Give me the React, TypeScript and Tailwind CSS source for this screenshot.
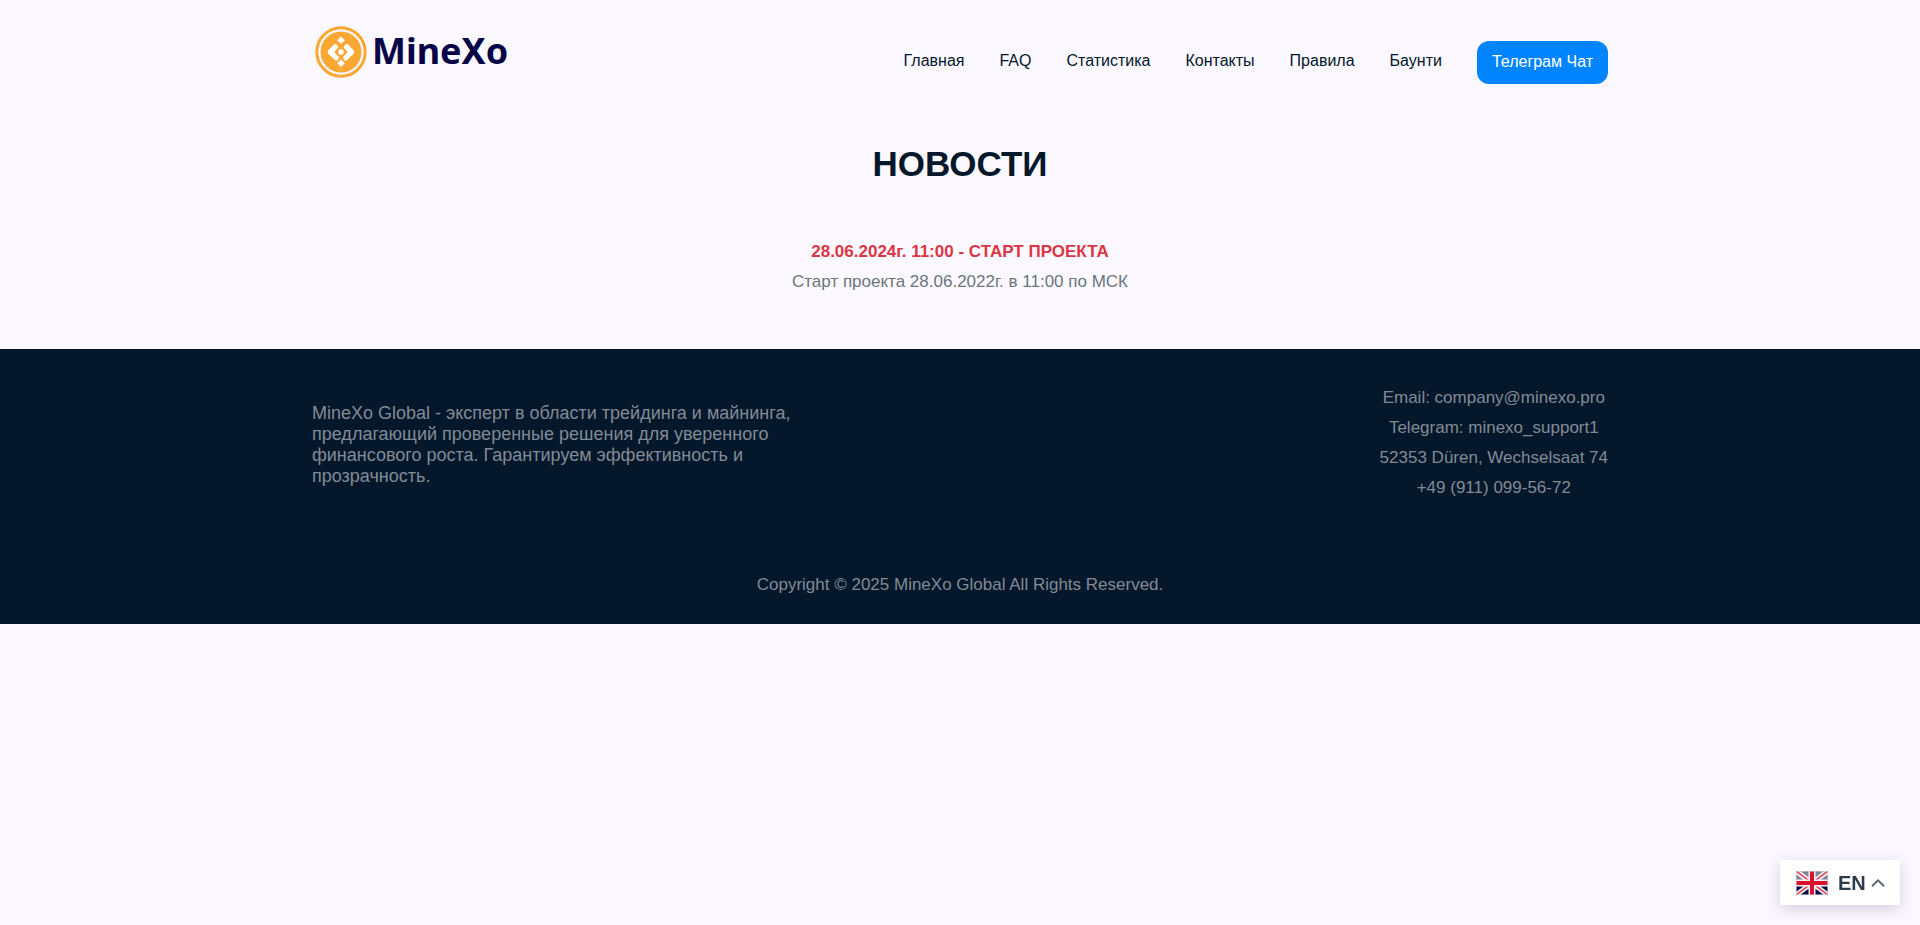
import { ChevronUp } from "lucide-react";

const navLinks = [
  { title: "Главная", href: "#home" },
  { title: "FAQ", href: "#faq" },
  { title: "Статистика", href: "#stats" },
  { title: "Контакты", href: "#contacts" },
  { title: "Правила", href: "#rules" },
  { title: "Баунти", href: "#bounty" },
];

const contacts = [
  "Email: company@minexo.pro",
  "Telegram: minexo_support1",
  "52353 Düren, Wechselsaat 74",
  "+49 (911) 099-56-72",
];

function Logo() {
  return (
    <a href="#home" aria-label="MineXo" className="flex items-start gap-[5px] pl-[3px]">
      <svg viewBox="0 0 52 52" className="size-[52px]" aria-hidden="true">
        <circle cx="26" cy="26" r="24.2" fill="none" stroke="#fba733" strokeWidth="3" />
        <circle cx="26" cy="26" r="20.5" fill="#fba733" />
        <g fill="#fff">
          <path d="M26 10.500l3.800 3.800-3.800 3.800-3.800-3.800z" />
          <path d="M26 33.500l3.800 3.800-3.800 3.800-3.800-3.800z" />
          <circle cx="26" cy="26" r="2.8" />
          <path d="M19.500 18q1.500-.5 2.500 1l1.500 2.500-3.500 3.500q-1 1 0 2l4 4-1 3q-1.500 1-3 0l-6-5.500q-2.500-2.500 0-5z" />
          <path d="M32.500 18q-1.500-.5-2.500 1l-1.500 2.500 3.500 3.500q1 1 0 2l-4 4 1 3q1.500 1 3 0l6-5.500q2.500-2.500 0-5z" />
        </g>
      </svg>
      <span className="font-['Noto_Sans',sans-serif] text-4xl leading-[50px] font-bold text-[#060547]">MineXo</span>
    </a>
  );
}

function Flag() {
  return (
    <svg viewBox="0 0 32 24" className="h-6 w-8" aria-hidden="true">
      <rect width="32" height="12" fill="#7d8592" />
      <rect y="12" width="32" height="12" fill="#0a0b45" />
      <path d="M0 0l32 24M32 0L0 24" stroke="#f4f4f6" strokeWidth="5" />
      <path d="M0 0l32 24M32 0L0 24" stroke="#e0455a" strokeWidth="1.600" />
      <path d="M16 0v24M0 12h32" stroke="#f4f4f6" strokeWidth="7" />
      <path d="M16 0v24M0 12h32" stroke="#dc0f2d" strokeWidth="4" />
      <rect x="0.5" y="0.5" width="31" height="23" fill="none" stroke="#c9ccd6" strokeOpacity="0.6" />
    </svg>
  );
}

export default function App() {
  return (
    <div className="min-h-screen bg-[#fbf9ff] font-['Liberation_Sans',Arial,sans-serif] text-[#04172b]">
      <header className="mx-auto flex max-w-[1320px] items-start justify-between px-3 pt-[26px]">
        <Logo />
        <nav className="mt-[15px] flex items-center gap-[35px] text-base">
          {navLinks.map((link) => (
            <a key={link.title} href={link.href} className="-mt-1">
              {link.title}
            </a>
          ))}
          <a href="#chat" className="rounded-xl bg-[#0085ff] px-[15px] pt-2 pb-[10px] leading-[25px] text-white">
            Телеграм Чат
          </a>
        </nav>
      </header>

      <main className="px-3 pt-[55px] pb-[52px] text-center">
        <h1 className="text-[35px] leading-[50px] font-bold">НОВОСТИ</h1>
        <h2 className="mt-[48px] text-[17px] leading-[30px] font-bold text-[#dc3545]">
          28.06.2024г. 11:00 - СТАРТ ПРОЕКТА
        </h2>
        <p className="text-[17px] leading-[30px] text-[#6c757d]">Старт проекта 28.06.2022г. в 11:00 по МСК</p>
      </main>

      <footer className="bg-[#04172b] pt-[34px] pb-6 text-[#828b95]">
        <div className="mx-auto flex max-w-[1320px] items-start justify-between px-3">
          <p className="mt-5 max-w-[500px] text-lg leading-[21px]">
            MineXo Global - эксперт в области трейдинга и майнинга, предлагающий проверенные решения для уверенного
            финансового роста. Гарантируем эффективность и прозрачность.
          </p>
          <address className="text-center text-[17px] leading-[30px] not-italic">
            {contacts.map((line) => (
              <p key={line}>{line}</p>
            ))}
          </address>
        </div>
        <p className="mt-[67px] text-center text-[17px] leading-[30px]">
          Copyright © 2025 MineXo Global All Rights Reserved.
        </p>
      </footer>

      <button className="fixed right-5 bottom-5 flex h-[45px] w-[120px] items-center bg-white pl-4 text-[#2d3a4e] shadow-[0_4px_14px_rgba(40,20,80,0.18)]">
        <Flag />
        <span className="ml-[10px] text-xl font-bold">EN</span>
        <ChevronUp className="ml-px size-[22px] text-[#5c6675]" strokeWidth={2} />
      </button>
    </div>
  );
}
